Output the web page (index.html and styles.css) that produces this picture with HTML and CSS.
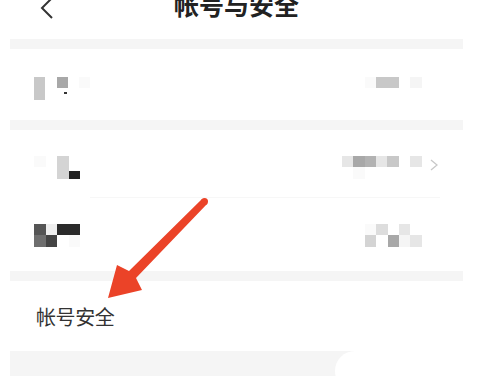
FILE: index.html
```html
<!DOCTYPE html>
<html lang="zh-CN">
<head>
    <meta charset="UTF-8">
    <meta name="viewport" content="width=device-width, initial-scale=1.0">
    <title>帐号与安全</title>
    <link rel="stylesheet" href="styles.css">
</head>
<body>
    <div class="page">
        <header class="nav">
            <svg class="back" width="14" height="24" viewBox="0 0 14 24">
                <polyline points="12,1 2,11 12,21" fill="none" stroke="#333" stroke-width="2"/>
            </svg>
            <h1 class="title">帐号与安全</h1>
        </header>

        <div class="gap"></div>

        <!-- row 1 -->
        <div class="row row-a">
            <div class="mosaic cols5">
                <i class="s7"></i><i></i><i class="s9"></i><i></i><i class="s1"></i>
                <i class="s7"></i><i></i><i class="dash"></i><i></i><i></i>
            </div>
            <div class="right">
                <div class="mosaic cols5">
                    <i class="s1"></i><i class="s7"></i><i class="s7"></i><i></i><i class="s2"></i>
                </div>
                <span class="arrow-slot"></span>
            </div>
        </div>

        <div class="gap"></div>

        <!-- row 2 -->
        <div class="row row-b">
            <div class="mosaic cols4">
                <i class="s1"></i><i></i><i class="s6"></i><i></i>
                <i></i><i></i><i class="s6"></i><i class="hand"></i>
            </div>
            <div class="right">
                <div class="mosaic cols7">
                    <i class="s4"></i><i class="s9"></i><i class="s8"></i><i class="s4"></i><i class="s7"></i><i></i><i class="s4"></i>
                    <i></i><i class="s1"></i><i></i><i></i><i></i><i></i><i></i>
                </div>
                <svg class="arrow-slot" width="8" height="12" viewBox="0 0 8 12">
                    <polyline points="1,1 7,6 1,11" fill="none" stroke="#c8c8c8" stroke-width="1.3"/>
                </svg>
            </div>
        </div>

        <div class="line"></div>

        <!-- row 3 -->
        <div class="row row-c">
            <div class="mosaic cols4">
                <i class="s11"></i><i class="s3"></i><i class="s13"></i><i class="s13"></i>
                <i class="s10"></i><i class="s12"></i><i></i><i class="s1"></i>
            </div>
            <div class="right">
                <div class="mosaic cols5">
                    <i class="s1"></i><i class="s5"></i><i></i><i class="s4"></i><i></i>
                    <i class="s6"></i><i></i><i class="s9"></i><i class="s2"></i><i class="s4"></i>
                </div>
                <span class="arrow-slot"></span>
            </div>
        </div>

        <div class="gap"></div>

        <!-- row 4 -->
        <div class="row row-d">
            <span class="label">帐号安全</span>
        </div>

        <div class="gap bottom">
            <div class="pill"></div>
        </div>
    </div>

    <!-- red pointer drawn over the screenshot -->
    <svg class="pointer" width="500" height="376" viewBox="0 0 500 376">
        <polygon points="202,199 207,204 136,278 142,290 108,298 117,265 129,271" fill="#eb4328"/>
        <circle cx="204.5" cy="201.5" r="3.5" fill="#eb4328"/>
    </svg>
</body>
</html>
```

FILE: styles.css
```css
html, body {
    margin: 0;
    padding: 0;
    height: 376px;
    overflow: hidden;
    background: #fff;
}

body {
    position: relative;
    font-family: "Noto Sans CJK SC", "Noto Sans", sans-serif;
    color: #333;
}

.page {
    width: 453px;
    margin-left: 10px;
}

.nav {
    height: 39px;
    display: grid;
    grid-template-columns: 1fr auto 1fr;
    align-items: start;
}

.back {
    display: block;
    margin: -3px 0 0 30px;
}

.title {
    margin: -8px 0 0 0;
    font-size: 25px;
    line-height: 25px;
    font-weight: 700;
    color: #222;
}

.gap {
    height: 10px;
    background: #f5f5f5;
}

.line {
    height: 1px;
    margin: 0 23px 0 80px;
    background: #f7f7f7;
}

.row {
    display: flex;
    justify-content: space-between;
    align-items: flex-start;
    padding: 0 25px 0 24px;
}

.row-a {
    height: 71px;
    padding-top: 28px;
    box-sizing: border-box;
}

.row-b {
    height: 67px;
    padding-top: 26px;
    box-sizing: border-box;
}

.row-c {
    height: 73px;
    padding-top: 26px;
    box-sizing: border-box;
}

.row-d {
    height: 70px;
    align-items: center;
    padding-left: 26px;
}

.label {
    font-size: 20px;
    letter-spacing: -0.4px;
    color: #333;
}

.right {
    display: flex;
    align-items: flex-start;
    gap: 8.5px;
}

.arrow-slot {
    display: block;
    width: 8px;
    height: 12px;
    margin-top: 3px;
}

.mosaic {
    display: grid;
    grid-auto-rows: 11.4px;
}

.cols4 { grid-template-columns: repeat(4, 11.5px); }
.cols5 { grid-template-columns: repeat(5, 11.3px); }
.cols7 { grid-template-columns: repeat(7, 11.4px); }

.mosaic i { display: block; }

.s1 { background: #fafafa; }
.s2 { background: #f5f5f5; }
.s3 { background: #eeeeee; }
.s4 { background: #e6e6e6; }
.s5 { background: #dddddd; }
.s6 { background: #d4d4d4; }
.s7 { background: #c8c8c8; }
.s8 { background: #b2b2b2; }
.s9 { background: #a8a8a8; }
.s10 { background: #6e6e6e; }
.s11 { background: #555555; }
.s12 { background: #444444; }
.s13 { background: #2a2a2a; }

.dash {
    background: linear-gradient(#fff 4px, #333 4px, #333 6px, #fff 6px);
    margin: 0 1px 0 7px;
}

.hand {
    background: linear-gradient(#fff 4px, #222 4px);
}

.bottom {
    height: 30px;
    display: flex;
    justify-content: flex-end;
}

.pill {
    width: 128px;
    height: 40px;
    background: #fff;
    border-radius: 20px 0 0 20px;
}

.pointer {
    position: absolute;
    top: 0;
    left: 0;
    pointer-events: none;
}
```
